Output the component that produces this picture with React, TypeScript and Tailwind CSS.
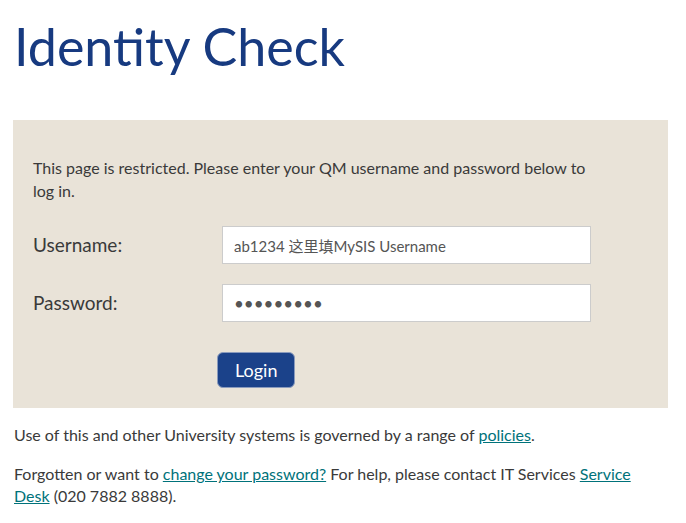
import React from "react";

export default function App() {
  return (
    <div className="bg-white min-h-screen text-[#333] font-['Lato','Noto_Sans_CJK_SC',sans-serif]">
      <h1 className="px-[14px] pt-[12px] text-[52px] leading-[68px] text-[#173a80]">Identity Check</h1>

      <div className="ml-[13px] mr-[18px] mt-[40px] bg-[#e9e3d8] pl-[20px] pr-[77px] pt-[36px] pb-[20px]">
        <p className="text-[16px] leading-[23px] text-[#3a3a3a]">
          This page is restricted. Please enter your QM username and password below to log in.
        </p>

        <form className="mt-[24px] flex flex-col gap-[20px]" onSubmit={(e) => e.preventDefault()}>
          <div className="flex items-center">
            <label className="w-[189px] text-[19px] text-[#3a3a3a]">Username:</label>
            <input
              type="text"
              defaultValue="ab1234 这里填MySIS Username"
              className="flex-1 h-[38px] bg-white border border-[#ccc] px-[11px] text-[15px] text-[#555] outline-none"
            />
          </div>
          <div className="flex items-center">
            <label className="w-[189px] text-[19px] text-[#3a3a3a]">Password:</label>
            <input
              type="password"
              defaultValue="password1"
              className="flex-1 h-[38px] bg-white border border-[#ccc] px-[11px] text-[17px] text-[#555] outline-none"
            />
          </div>
          <div className="pl-[184px] pt-[10px]">
            <button className="h-[36px] px-[17px] rounded-[6px] bg-[#1b428a] border border-[#8a9bbd] text-white text-[18px]">
              Login
            </button>
          </div>
        </form>
      </div>

      <div className="pl-[14px] pr-[24px] pt-[16px] text-[16px] leading-[22px] text-[#3a3a3a]">
        <p>
          Use of this and other University systems is governed by a range of{" "}
          <a href="#" className="text-[#00727a] underline">policies</a>.
        </p>
        <p className="mt-[17px]">
          Forgotten or want to <a href="#" className="text-[#00727a] underline">change your password?</a> For help, please contact IT Services{" "}
          <a href="#" className="text-[#00727a] underline">Service Desk</a> (020 7882 8888).
        </p>
      </div>
    </div>
  );
}
